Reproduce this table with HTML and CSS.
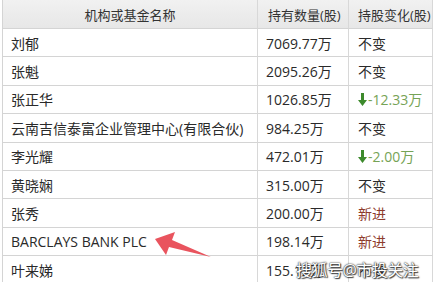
FILE: index.html
```html
<!DOCTYPE html>
<html lang="zh">
<head>
<meta charset="utf-8">
<link rel="stylesheet" href="styles.css">
</head>
<body>
<div class="page">
  <div class="grid">
    <div class="th c1">机构或基金名称</div>
    <div class="th">持有数量(股)</div>
    <div class="th last">持股变化(股)</div>

    <div class="td c1">刘郁</div><div class="td">7069.77万</div><div class="td last">不变</div>
    <div class="td c1">张魁</div><div class="td">2095.26万</div><div class="td last">不变</div>
    <div class="td c1">张正华</div><div class="td">1026.85万</div><div class="td last down"><svg class="arr" viewBox="0 0 9 13" width="9" height="13"><path d="M3 0h3v7h3L4.5 13 0 7h3z"/></svg>-12.33万</div>
    <div class="td c1">云南吉信泰富企业管理中心(有限合伙)</div><div class="td">984.25万</div><div class="td last">不变</div>
    <div class="td c1">李光耀</div><div class="td">472.01万</div><div class="td last down"><svg class="arr" viewBox="0 0 9 13" width="9" height="13"><path d="M3 0h3v7h3L4.5 13 0 7h3z"/></svg>-2.00万</div>
    <div class="td c1">黄晓娴</div><div class="td">315.00万</div><div class="td last">不变</div>
    <div class="td c1">张秀</div><div class="td">200.00万</div><div class="td last new">新进</div>
    <div class="td c1">BARCLAYS BANK PLC</div><div class="td">198.14万</div><div class="td last new">新进</div>
    <div class="td c1">叶来娣</div><div class="td">155.12万</div><div class="td last">不变</div>
  </div>
  <svg class="pointer" viewBox="0 0 435 282" width="435" height="282">
    <polygon points="155,239 175,232 172,240 211,257 169,247 166,255"/>
  </svg>
  <div class="mark">搜狐号@市投关注</div>
</div>
</body>
</html>
```
FILE: styles.css
```css
html, body {
  margin: 0;
  padding: 0;
  background: #fff;
}
.page {
  position: relative;
  width: 435px;
  height: 282px;
  overflow: hidden;
  font-family: "Open Sans", "Noto Sans CJK SC", sans-serif;
  color: #2a2a2a;
}
.grid {
  margin-left: 2px;
  width: 430px;
  display: grid;
  grid-template-columns: 255px 91px 84px;
  grid-template-rows: 29px;
  grid-auto-rows: 28.4px;
  border-left: 1px solid #d4d4d4;
}
.th, .td {
  box-sizing: border-box;
  border-right: 1px solid #d8d8d8;
  border-bottom: 1px solid #d4d4d4;
  display: flex;
  align-items: center;
  white-space: nowrap;
  overflow: hidden;
}
.th {
  background: linear-gradient(#f1f1f1, #e7e7e7);
  font-size: 13px;
  color: #333;
  padding-left: 10px;
}
.th.c1 {
  justify-content: center;
  padding-left: 0;
}
.td {
  font-size: 14px;
  padding-left: 8px;
}
.td.last, .th.last {
  padding-left: 9px;
}
.down {
  color: #76a356;
}
.arr {
  fill: #3d8a2c;
  margin-right: 1px;
}
.new {
  color: #8e3b2c;
}
.pointer {
  position: absolute;
  left: 0;
  top: 0;
  fill: #e9545e;
}
.mark {
  position: absolute;
  left: 296px;
  top: 257px;
  font-size: 16px;
  color: #fff;
  letter-spacing: -0.5px;
  text-shadow: 0 0 1px #333, 0 0 2px #333, 1px 1px 1px #444;
}
```
